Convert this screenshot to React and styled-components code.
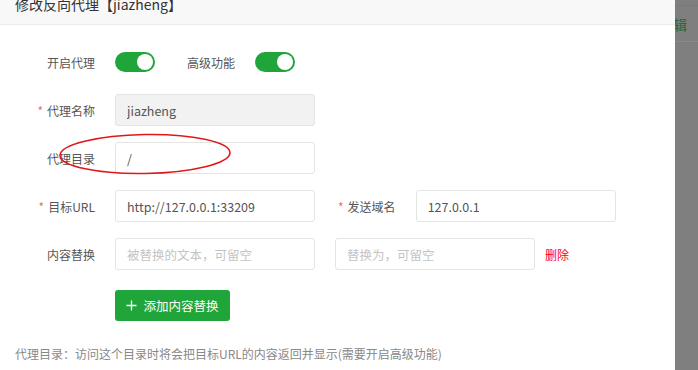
import React from "react";
import styled, { createGlobalStyle } from "styled-components";

const GlobalStyle = createGlobalStyle`
  html, body {
    margin: 0;
    padding: 0;
    background: #7f7f7f;
    overflow: hidden;
  }
  body {
    font-family: "Microsoft YaHei", "Noto Sans CJK SC", "Liberation Sans", sans-serif;
  }
`;

const Page = styled.div`
  display: flex;
  width: 698px;
  height: 370px;
  overflow: hidden;
`;

const Dialog = styled.div`
  position: relative;
  width: 675px;
  height: 370px;
  background: #fff;
  flex-shrink: 0;
  z-index: 1;
`;

const Header = styled.div`
  height: 42px;
  margin-top: -17px;
  background: #f8f8f8;
  border-bottom: 1px solid #ebebeb;
  padding-left: 15px;
  font-size: 14px;
  line-height: 42px;
  color: #333;
  box-sizing: border-box;
`;

const Body = styled.div`
  display: flex;
  flex-direction: column;
  padding-top: 21px;
`;

const Row = styled.div`
  display: flex;
  align-items: center;
  height: 32px;
  margin-bottom: 16px;
`;

const Label = styled.label`
  width: 95px;
  padding-right: 20px;
  text-align: right;
  font-size: 12px;
  color: #555;
  flex-shrink: 0;

  ${(p) =>
    p.required &&
    `
    &::before {
      content: "*";
      color: #f56c6c;
      margin-right: 4px;
    }
  `}
`;

const InlineLabel = styled(Label)`
  width: auto;
  padding-left: ${(p) => p.gap || 0}px;
`;

const Input = styled.input`
  width: 200px;
  height: 32px;
  box-sizing: border-box;
  border: 1px solid #e4e4e4;
  border-radius: 3px;
  padding: 0 11px;
  font-family: inherit;
  font-size: 12.5px;
  color: #555;
  background: ${(p) => (p.disabled ? "#f2f2f2" : "#fff")};
  outline: none;

  &::placeholder {
    color: #c4c4c4;
  }
`;

const Spacer = styled.div`
  width: ${(p) => p.w}px;
  flex-shrink: 0;
`;

const Switch = styled.span`
  position: relative;
  display: inline-block;
  width: 40px;
  height: 20px;
  border-radius: 10px;
  background: #20a53a;
  flex-shrink: 0;

  &::after {
    content: "";
    position: absolute;
    top: 2px;
    right: 2px;
    width: 16px;
    height: 16px;
    border-radius: 50%;
    background: #fff;
  }
`;

const DeleteLink = styled.span`
  margin-left: 10px;
  font-size: 12px;
  color: #f00;
`;

const AddButton = styled.button`
  margin: 4px 0 0 115px;
  width: 115px;
  height: 31px;
  border: none;
  border-radius: 3px;
  background: #20a53a;
  color: #fff;
  font-family: inherit;
  font-size: 12.5px;
  display: flex;
  align-items: center;
  justify-content: center;
  gap: 6px;
  padding: 0;
`;

const Tip = styled.div`
  margin-top: 24px;
  padding-left: 15px;
  font-size: 12px;
  color: #888;
`;

const Ring = styled.svg`
  position: absolute;
  left: 55px;
  top: 130px;
  pointer-events: none;
`;

const Backdrop = styled.div`
  flex: 1;
  position: relative;
  border-top: 1px solid #787878;
  margin-top: 5px;
`;

const BackdropText = styled.div`
  margin-top: 10px;
  margin-left: -2px;
  font-size: 14px;
  line-height: 16px;
  color: #24683a;
  padding-bottom: 9px;
  border-bottom: 1px solid #8a8a8a;
`;

export default function App() {
  return (
    <>
      <GlobalStyle />
      <Page>
        <Dialog>
          <Header>修改反向代理【jiazheng】</Header>
          <Body>
            <Row>
              <Label>开启代理</Label>
              <Switch />
              <InlineLabel gap={32}>高级功能</InlineLabel>
              <Switch />
            </Row>
            <Row>
              <Label required>代理名称</Label>
              <Input disabled value="jiazheng" readOnly />
            </Row>
            <Row>
              <Label>代理目录</Label>
              <Input value="/" readOnly />
            </Row>
            <Row>
              <Label required>目标URL</Label>
              <Input value="http://127.0.0.1:33209" readOnly />
              <InlineLabel required gap={23}>发送域名</InlineLabel>
              <Input value="127.0.0.1" readOnly />
            </Row>
            <Row>
              <Label>内容替换</Label>
              <Input placeholder="被替换的文本，可留空" />
              <Spacer w={20} />
              <Input placeholder="替换为，可留空" />
              <DeleteLink>删除</DeleteLink>
            </Row>
            <AddButton>
              <svg width="11" height="11" viewBox="0 0 11 11">
                <path d="M5.5 0.5v10M0.5 5.5h10" stroke="#fff" strokeWidth="1.3" fill="none" />
              </svg>
              添加内容替换
            </AddButton>
            <Tip>代理目录：访问这个目录时将会把目标URL的内容返回并显示(需要开启高级功能)</Tip>
          </Body>
          <Ring width="180" height="50" viewBox="0 0 180 50">
            <ellipse cx="90" cy="24" rx="85" ry="19.5" fill="none" stroke="#e0181b" strokeWidth="1.6" transform="rotate(-1 90 24)" />
          </Ring>
        </Dialog>
        <Backdrop>
          <BackdropText>辑</BackdropText>
        </Backdrop>
      </Page>
    </>
  );
}
